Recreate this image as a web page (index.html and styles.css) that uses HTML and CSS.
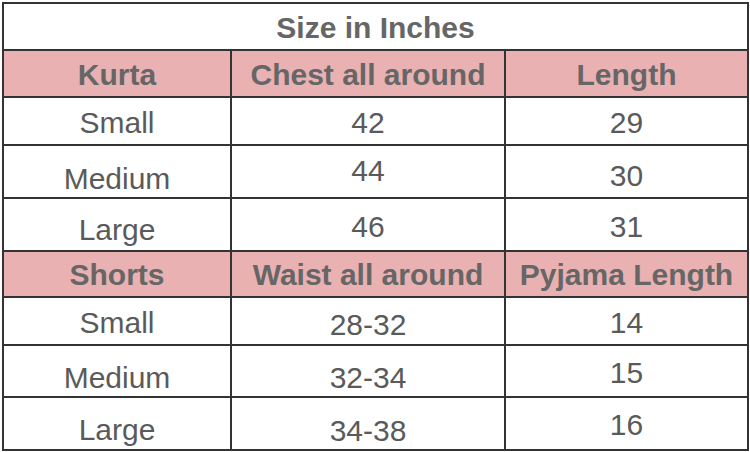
FILE: index.html
```html
<!DOCTYPE html>
<html lang="en">
<head>
<meta charset="utf-8">
<title>Size in Inches</title>
<link rel="stylesheet" href="styles.css">
</head>
<body>
<table class="size-table">
  <colgroup>
    <col class="c1">
    <col class="c2">
    <col class="c3">
  </colgroup>
  <tbody>
    <tr class="h47"><td class="title" colspan="3">Size in Inches</td></tr>
    <tr class="h47 head"><td>Kurta</td><td>Chest all around</td><td>Length</td></tr>
    <tr class="h48"><td>Small</td><td>42</td><td>29</td></tr>
    <tr class="h53"><td class="b8">Medium</td><td class="b16">44</td><td>30</td></tr>
    <tr class="h53"><td class="b10">Large</td><td class="b13">46</td><td class="b13">31</td></tr>
    <tr class="h46 head"><td>Shorts</td><td>Waist all around</td><td>Pyjama Length</td></tr>
    <tr class="h48"><td>Small</td><td class="b9">28-32</td><td>14</td></tr>
    <tr class="h52"><td class="b8">Medium</td><td class="b8">32-34</td><td class="b13">15</td></tr>
    <tr class="h53"><td class="b9">Large</td><td class="b8">34-38</td><td class="b14">16</td></tr>
  </tbody>
</table>
</body>
</html>
```

FILE: styles.css
```css
html, body {
  margin: 0;
  padding: 0;
  background: #ffffff;
}

.size-table {
  margin: 2px 0 0 2px;
  width: 747px;
  table-layout: fixed;
  border-collapse: separate;
  border-spacing: 0;
  border-top: 2px solid #333333;
  border-left: 2px solid #333333;
  font-family: "Liberation Sans", Arial, sans-serif;
  font-size: 30px;
  line-height: 30px;
  color: #5a5a5a;
}

.c1 { width: 228px; }
.c2 { width: 274px; }
.c3 { width: 243px; }

.size-table td {
  box-sizing: border-box;
  border-right: 2px solid #333333;
  border-bottom: 2px solid #333333;
  padding: 0 0 6px 0;
  text-align: center;
  vertical-align: bottom;
  white-space: nowrap;
  overflow: hidden;
}

.h46 { height: 46px; }
.h47 { height: 47px; }
.h48 { height: 48px; }
.h52 { height: 52px; }
.h53 { height: 53px; }

.size-table td.title {
  font-weight: bold;
  color: #666666;
}

.head td {
  background: #e9b1b1;
  font-weight: bold;
  color: #666666;
}

.size-table td.b8 { padding-bottom: 3px; }
.size-table td.b9 { padding-bottom: 4px; }
.size-table td.b10 { padding-bottom: 5px; }
.size-table td.b13 { padding-bottom: 8px; }
.size-table td.b14 { padding-bottom: 9px; }
.size-table td.b16 { padding-bottom: 11px; }
```
